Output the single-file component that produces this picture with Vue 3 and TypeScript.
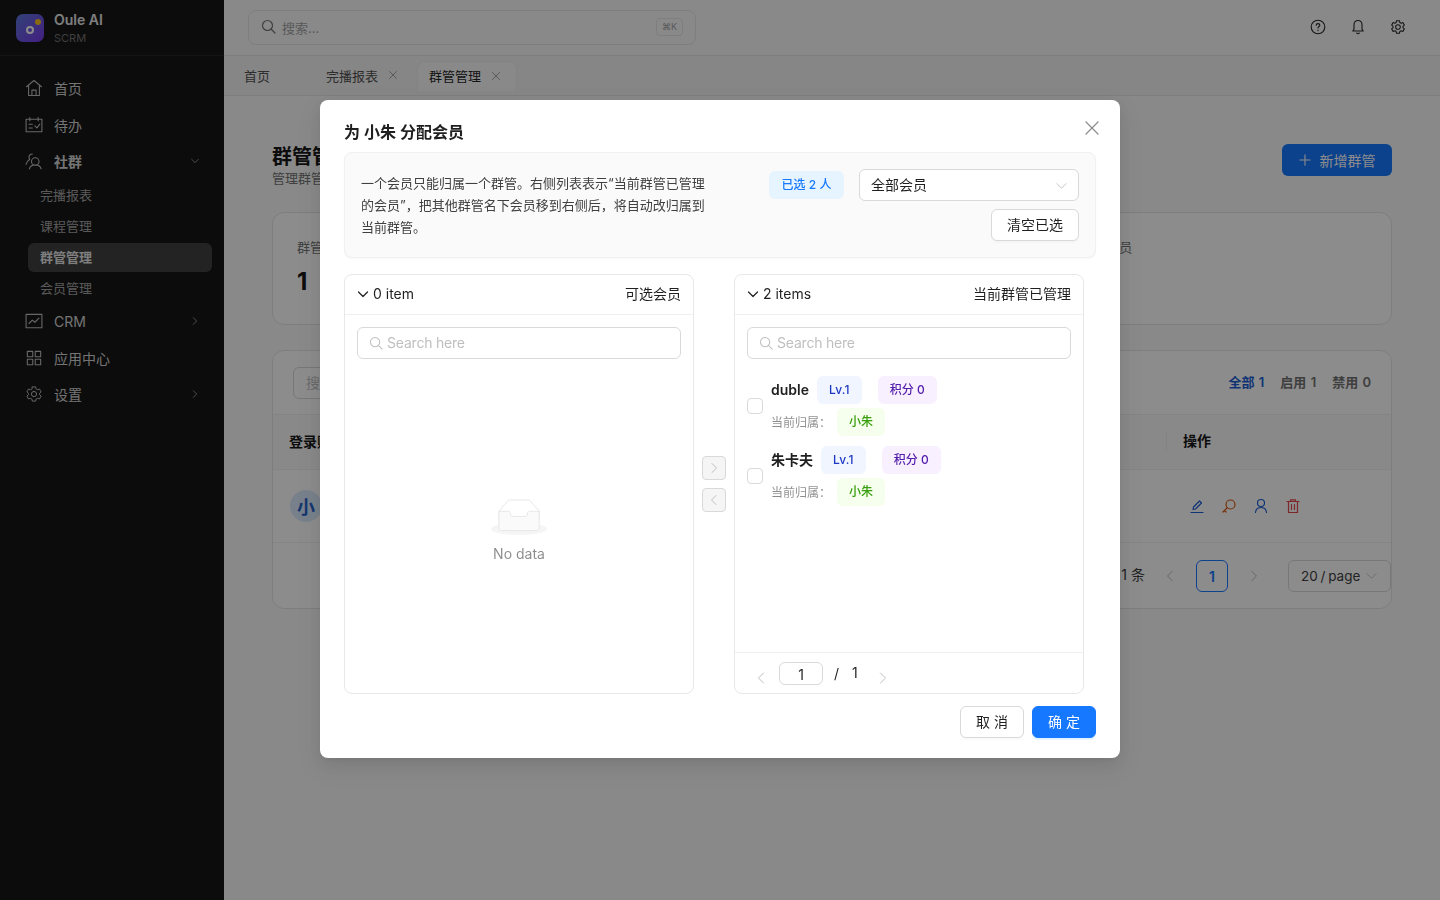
<script setup lang="ts">
import { ref } from 'vue';

const icons: Record<string, string> = {
  home: 'M3 10.500 12 3l9 7.500M5.500 8.500V21h13V8.500M9.500 21v-6.500h5V21',
  todo: 'M2.500 5h19v15h-19zM7 3v4M17 3v4M6 11h4M6 15.500h4M13 13l2.500 2.500L19 11',
  group: 'M10 3.500a4 4 0 0 0-4 4.200c0 1 .3 1.800.8 2.500C4.500 11.500 3 13.800 2.500 16M13.500 8a4.500 4.500 0 1 0 0 9 4.500 4.500 0 0 0 0-9M6.500 21.500c.5-3 3.200-4.800 7-4.800s6.500 1.800 7 4.800',
  crm: 'M2.500 4h19v16h-19zM6 15l4-4 3 2.500 5-5',
  apps: 'M4 4h6.500v6.500H4zM13.500 4H20v6.500h-6.500zM4 13.500h6.500V20H4zM13.500 13.500H20V20h-6.500z',
  gear: 'M12 8.500a3.500 3.500 0 1 0 0 7 3.500 3.500 0 0 0 0-7ZM9.800 2.500h4.400l.6 2.800 1.800 1 2.700-.9 2.200 3.800-2.100 1.900v1.800l2.100 1.900-2.200 3.800-2.700-.9-1.800 1-.6 2.800H9.800l-.6-2.800-1.800-1-2.700.9-2.200-3.800 2.100-1.900v-1.800L2.500 9.200l2.200-3.800 2.700.9 1.800-1z',
};

const subItems = [
  { label: '完播报表', active: false },
  { label: '课程管理', active: false },
  { label: '群管管理', active: true },
  { label: '会员管理', active: false },
];

const tabs = [
  { label: '首页', closable: false, active: false },
  { label: '完播报表', closable: true, active: false },
  { label: '群管管理', closable: true, active: true },
];

// only the first card's number shows, the others sit behind the dialog
const stats = [
  { label: '群管总数', value: '1' },
  { label: '启用群管', value: '' },
  { label: '已管理总会员', value: '' },
];

const members = ref([
  { name: 'duble', level: 'Lv.1', points: 0, owner: '小朱' },
  { name: '朱卡夫', level: 'Lv.1', points: 0, owner: '小朱' },
]);
</script>

<template>
  <div class="layout">
    <aside class="sidebar">
      <div class="brand">
        <div class="logo"><span class="logo-ring"></span><span class="logo-dot"></span></div>
        <div class="brand-text">
          <div class="brand-name">Oule AI</div>
          <div class="brand-sub">SCRM</div>
        </div>
      </div>
      <nav class="nav">
        <div class="nav-item">
          <svg class="nav-icon" viewBox="0 0 24 24"><path :d="icons.home" /></svg>
          <span>首页</span>
        </div>
        <div class="nav-item">
          <svg class="nav-icon" viewBox="0 0 24 24"><path :d="icons.todo" /></svg>
          <span>待办</span>
        </div>
        <div class="nav-item open">
          <svg class="nav-icon" viewBox="0 0 24 24"><path :d="icons.group" /></svg>
          <span>社群</span>
          <svg class="nav-arrow" viewBox="0 0 12 12"><path d="M2 4l4 4 4-4" /></svg>
        </div>
        <div class="sub-list">
          <div v-for="s in subItems" :key="s.label" class="sub-item" :class="{ active: s.active }">{{ s.label }}</div>
        </div>
        <div class="nav-item">
          <svg class="nav-icon" viewBox="0 0 24 24"><path :d="icons.crm" /></svg>
          <span>CRM</span>
          <svg class="nav-arrow" viewBox="0 0 12 12"><path d="M4 2l4 4-4 4" /></svg>
        </div>
        <div class="nav-item">
          <svg class="nav-icon" viewBox="0 0 24 24"><path :d="icons.apps" /></svg>
          <span>应用中心</span>
        </div>
        <div class="nav-item">
          <svg class="nav-icon gear-icon" viewBox="0 0 24 24"><path :d="icons.gear" /></svg>
          <span>设置</span>
          <svg class="nav-arrow" viewBox="0 0 12 12"><path d="M4 2l4 4-4 4" /></svg>
        </div>
      </nav>
    </aside>

    <div class="main">
      <header class="topbar">
        <div class="global-search">
          <svg class="search-icon" viewBox="0 0 16 16"><circle cx="6.500" cy="6.500" r="5" /><path d="M10 10l4 4" /></svg>
          <span class="global-placeholder">搜索...</span>
          <span class="kbd">⌘K</span>
        </div>
        <div class="top-actions">
          <svg class="top-icon" viewBox="0 0 16 16"><circle cx="8" cy="8" r="6.800" /><path d="M6.200 6.300c0-1 .8-1.700 1.800-1.700s1.800.7 1.800 1.600c0 1.300-1.800 1.400-1.800 2.800M8 11v.6" /></svg>
          <svg class="top-icon" viewBox="0 0 16 16"><path d="M8 1.500c-2.500 0-4 1.800-4 4.200v4.500L2.800 12h10.400L12 10.200V5.700c0-2.400-1.500-4.200-4-4.200ZM6.700 14c.3.500.8.700 1.300.7s1-.2 1.300-.7" /></svg>
          <svg class="top-icon gear" viewBox="0 0 24 24"><path :d="icons.gear" /></svg>
        </div>
      </header>

      <div class="tabs">
        <div v-for="t in tabs" :key="t.label" class="tab" :class="{ active: t.active, plain: !t.closable }">
          <span>{{ t.label }}</span>
          <svg v-if="t.closable" class="tab-close" viewBox="0 0 10 10"><path d="M1.500 1.500l7 7M8.500 1.500l-7 7" /></svg>
        </div>
      </div>

      <main class="content">
        <div class="page-head">
          <div class="page-head-text">
            <h1 class="page-title">群管管理</h1>
            <p class="page-sub">管理群管账号</p>
          </div>
          <button class="add-btn">
            <svg viewBox="0 0 14 14"><path d="M7 1v12M1 7h12" /></svg>
            <span>新增群管</span>
          </button>
        </div>

        <div class="stats">
          <div v-for="s in stats" :key="s.label" class="stat-card">
            <div class="stat-label">{{ s.label }}</div>
            <div v-if="s.value" class="stat-value">{{ s.value }}</div>
          </div>
        </div>

        <section class="table-card">
          <div class="toolbar">
            <div class="table-search">搜索群管</div>
            <div class="filters">
              <span class="filter on">全部 1</span>
              <span class="filter">启用 1</span>
              <span class="filter">禁用 0</span>
            </div>
          </div>
          <div class="thead">
            <span class="th-name">登录账号</span>
            <span class="th-op">操作</span>
          </div>
          <div class="trow">
            <div class="avatar">小</div>
            <div class="ops">
              <svg class="op blue" viewBox="0 0 16 16"><path d="M2 14.500h12M4 11.500l.5-2.500 6-6 2 2-6 6z" /></svg>
              <svg class="op orange" viewBox="0 0 16 16"><circle cx="9.500" cy="6.500" r="4.500" /><path d="M6.300 9.700 2 14M3.500 12.500l1.500 1.500" /></svg>
              <svg class="op blue" viewBox="0 0 16 16"><circle cx="8" cy="5" r="3.500" /><path d="M2.500 14.500c.3-3 2.500-5 5.500-5s5.200 2 5.500 5" /></svg>
              <svg class="op red" viewBox="0 0 16 16"><path d="M2 3.500h12M5.500 3.500V1.800h5v1.700M3.500 3.500v11h9v-11M6.500 6.500v5M9.500 6.500v5" /></svg>
            </div>
          </div>
          <div class="table-foot">
            <span class="total">共 1 条</span>
            <svg class="page-arrow" viewBox="0 0 12 12"><path d="M8.500 1 3.500 6l5 5" /></svg>
            <span class="page-current">1</span>
            <svg class="page-arrow" viewBox="0 0 12 12"><path d="M3.500 1l5 5-5 5" /></svg>
            <span class="page-size">
              <span class="page-size-text">20 / page</span>
              <svg viewBox="0 0 12 12"><path d="M1 4l5 5 5-5" /></svg>
            </span>
          </div>
        </section>
      </main>
    </div>

    <div class="mask"></div>

    <div class="modal">
      <svg class="modal-close" viewBox="0 0 14 14"><path d="M1 1l12 12M13 1 1 13" /></svg>
      <div class="modal-title">为 小朱 分配会员</div>

      <div class="info-box">
        <p class="info-text">一个会员只能归属一个群管。右侧列表表示“当前群管已管理的会员”，把其他群管名下会员移到右侧后，将自动改归属到当前群管。</p>
        <div class="info-side">
          <div class="info-row">
            <span class="picked">已选 2 人</span>
            <div class="select">
              <span>全部会员</span>
              <svg viewBox="0 0 12 12"><path d="M1 4l5 5 5-5" /></svg>
            </div>
          </div>
          <button class="btn clear-btn">清空已选</button>
        </div>
      </div>

      <div class="transfer">
        <div class="panel">
          <div class="panel-head">
            <svg class="head-arrow" viewBox="0 0 12 12"><path d="M1.500 4l4.500 4.500L10.500 4" /></svg>
            <span class="head-count">0 item</span>
            <span class="head-title">可选会员</span>
          </div>
          <div class="panel-body">
            <div class="panel-search">
              <svg viewBox="0 0 16 16"><circle cx="6.500" cy="6.500" r="5" /><path d="M10 10l4 4" /></svg>
              <span>Search here</span>
            </div>
            <div class="empty">
              <svg class="empty-art" width="56" height="36" viewBox="0 0 64 41">
                <g transform="translate(0 1)" fill="none" fill-rule="evenodd">
                  <ellipse fill="#f5f5f5" stroke="none" cx="32" cy="33" rx="32" ry="7" />
                  <g fill-rule="nonzero" stroke="#e5e5e5">
                    <path d="M55 12.760L44.854 1.258C44.367.474 43.656 0 42.907 0H21.093c-.749 0-1.460.474-1.947 1.257L9 12.761V22h46v-9.240z" />
                    <path d="M41.613 15.931c0-1.605.994-2.930 2.227-2.931H55v18.137C55 33.260 53.680 35 52.050 35h-40.100C10.320 35 9 33.259 9 31.137V13h11.160c1.233 0 2.227 1.323 2.227 2.928v.022c0 1.605 1.005 2.901 2.237 2.901h14.752c1.232 0 2.237-1.308 2.237-2.913v-.007z" fill="#fafafa" />
                  </g>
                </g>
              </svg>
              <div class="empty-text">No data</div>
            </div>
          </div>
        </div>

        <div class="transfer-ops">
          <span class="op-btn"><svg viewBox="0 0 12 12"><path d="M4 1.500 8.500 6 4 10.500" /></svg></span>
          <span class="op-btn"><svg viewBox="0 0 12 12"><path d="M8 1.500 3.500 6 8 10.500" /></svg></span>
        </div>

        <div class="panel">
          <div class="panel-head">
            <svg class="head-arrow" viewBox="0 0 12 12"><path d="M1.500 4l4.500 4.500L10.500 4" /></svg>
            <span class="head-count">2 items</span>
            <span class="head-title">当前群管已管理</span>
          </div>
          <div class="panel-body">
            <div class="panel-search">
              <svg viewBox="0 0 16 16"><circle cx="6.500" cy="6.500" r="5" /><path d="M10 10l4 4" /></svg>
              <span>Search here</span>
            </div>
            <div class="member-list">
              <div v-for="m in members" :key="m.name" class="member">
                <span class="checkbox"></span>
                <div class="member-info">
                  <div class="member-line">
                    <span class="member-name">{{ m.name }}</span>
                    <span class="tag tag-level">{{ m.level }}</span>
                    <span class="tag tag-points">积分 {{ m.points }}</span>
                  </div>
                  <div class="member-line">
                    <span class="owner-label">当前归属：</span>
                    <span class="tag tag-owner">{{ m.owner }}</span>
                  </div>
                </div>
              </div>
            </div>
          </div>
          <div class="panel-foot">
            <svg class="foot-arrow" viewBox="0 0 12 12"><path d="M8.500 1 3.500 6l5 5" /></svg>
            <span class="foot-input">1</span>
            <span class="foot-slash">/</span>
            <span class="foot-total">1</span>
            <svg class="foot-arrow" viewBox="0 0 12 12"><path d="M3.500 1l5 5-5 5" /></svg>
          </div>
        </div>
      </div>

      <div class="modal-foot">
        <button class="btn">取 消</button>
        <button class="btn primary">确 定</button>
      </div>
    </div>
  </div>
</template>

<style>
html,
body {
  margin: 0;
  background: #fafafa;
}
</style>

<style scoped>
* {
  box-sizing: border-box;
}

svg {
  fill: none;
  stroke: currentColor;
  stroke-linecap: round;
  stroke-linejoin: round;
  flex: none;
}

.layout {
  display: flex;
  width: 1440px;
  height: 900px;
  overflow: hidden;
  font-family: Inter, 'Noto Sans CJK SC', sans-serif;
  font-size: 14px;
  color: #171717;
  background: #fafafa;
}

.sidebar {
  width: 224px;
  flex: none;
  background: #171717;
  color: #d4d4d4;
}

.brand {
  display: flex;
  align-items: center;
  gap: 10px;
  height: 56px;
  padding: 0 16px;
  border-bottom: 1px solid #262626;
}

.logo {
  position: relative;
  width: 28px;
  height: 28px;
  border-radius: 7px;
  background: linear-gradient(135deg, #5a78d8 0%, #7c3aed 100%);
}

.logo-ring {
  position: absolute;
  left: 10px;
  top: 12px;
  width: 8px;
  height: 8px;
  border: 2px solid #fff;
  border-radius: 50%;
}

.logo-dot {
  position: absolute;
  right: 3px;
  top: 5px;
  width: 6px;
  height: 6px;
  border-radius: 50%;
  background: #fbbf24;
}

.brand-name {
  font-size: 14px;
  line-height: 20px;
  font-weight: 600;
  color: #e5e5e5;
}

.brand-sub {
  font-size: 11px;
  line-height: 16px;
  color: #737373;
}

.nav {
  padding: 14px 12px 0;
}

.nav-item {
  display: flex;
  align-items: center;
  gap: 10px;
  height: 36px;
  margin-bottom: 0.5px;
  padding: 0 12px;
}

.nav-item.open {
  font-weight: 600;
}

.nav-icon {
  width: 20px;
  height: 20px;
  stroke-width: 1.300;
  color: #bdbdbd;
}

.nav-icon.gear-icon {
  transform: scale(0.9);
}

.nav-arrow {
  width: 10px;
  height: 10px;
  margin-left: auto;
  color: #a3a3a3;
}

.sub-list {
  display: flex;
  flex-direction: column;
  gap: 2px;
  padding: 1px 0 0.700px 16px;
}

.sub-item {
  height: 29px;
  line-height: 29px;
  padding-left: 12px;
  font-size: 13px;
  color: #a3a3a3;
  border-radius: 6px;
}

.sub-item.active {
  background: #404040;
  color: #e5e5e5;
  font-weight: 600;
}

.main {
  flex: 1;
  min-width: 0;
}

.topbar {
  display: flex;
  align-items: center;
  justify-content: space-between;
  height: 56px;
  padding: 0 34px 1px 24px;
  background: #fafafa;
  border-bottom: 1px solid #e5e5e5;
}

.global-search {
  display: flex;
  align-items: center;
  width: 448px;
  height: 35px;
  padding: 0 12px;
  border: 1px solid #e5e5e5;
  border-radius: 8px;
  color: #737373;
}

.search-icon {
  width: 16px;
  height: 16px;
  stroke-width: 1.200;
}

.global-placeholder {
  margin-left: 5px;
  font-size: 13px;
  color: #a3a3a3;
}

.kbd {
  margin-left: auto;
  padding: 0 5px;
  font-size: 9px;
  line-height: 16px;
  color: #a3a3a3;
  border: 1px solid #e5e5e5;
  border-radius: 4px;
}

.top-actions {
  display: flex;
  gap: 24px;
  color: #262626;
}

.top-icon {
  width: 16px;
  height: 16px;
  stroke-width: 1.100;
}

.top-icon.gear {
  stroke-width: 1.600;
}

.tabs {
  display: flex;
  align-items: flex-end;
  height: 40px;
  padding: 0 0 4px 8px;
  background: #f5f5f5;
  border-bottom: 1px solid #e5e5e5;
}

.tab {
  display: flex;
  align-items: center;
  gap: 10px;
  height: 30px;
  padding: 0 12px 2px;
  font-size: 13px;
  color: #525252;
  border-radius: 8px 8px 0 0;
}

.tab.plain {
  width: 82px;
}

.tab.active {
  width: 100px;
  flex: none;
  margin-left: 7px;
  padding: 0 11px 2px;
  color: #262626;
  background: #fafafa;
  border: 1px solid #eeeeee;
  border-bottom: 0;
}

.tab-close {
  width: 10px;
  height: 10px;
  color: #a3a3a3;
}

.content {
  padding: 48px 48px 0;
}

.page-head {
  display: flex;
  align-items: flex-start;
  justify-content: space-between;
}

.page-head-text {
  padding-top: 2px;
}

.page-title {
  margin: 0;
  font-size: 20px;
  line-height: 22px;
  font-weight: 700;
}

.page-sub {
  margin: 0;
  font-size: 13px;
  line-height: 20px;
  color: #737373;
}

.add-btn {
  display: flex;
  align-items: center;
  gap: 9px;
  height: 32px;
  width: 110px;
  padding: 0 0 1px;
  justify-content: center;
  border: 0;
  border-radius: 6px;
  background: #1677ff;
  color: #fff;
  font: inherit;
  font-size: 14px;
}

.add-btn svg {
  width: 12px;
  height: 12px;
  stroke-width: 1.300;
}

.stats {
  display: grid;
  grid-template-columns: repeat(3, 1fr);
  gap: 16px;
  margin-top: 24px;
}

.stat-card {
  height: 113px;
  padding: 24px;
  background: #fff;
  border: 1px solid #e5e5e5;
  border-radius: 12px;
}

.stat-label {
  font-size: 13px;
  line-height: 20px;
  color: #737373;
}

.stat-value {
  margin-top: 11px;
  font-size: 24px;
  line-height: 28px;
  font-weight: 700;
}

.table-card {
  margin-top: 25px;
  height: 259px;
  background: #fff;
  border: 1px solid #e5e5e5;
  border-radius: 12px;
  overflow: hidden;
}

.toolbar {
  display: flex;
  align-items: center;
  justify-content: space-between;
  height: 63px;
  padding: 0 20px;
}

.table-search {
  width: 260px;
  height: 32px;
  padding-left: 12px;
  font-size: 14px;
  line-height: 30px;
  color: #bfbfbf;
  border: 1px solid #d9d9d9;
  border-radius: 6px;
}

.filters {
  display: flex;
  gap: 16px;
  padding-bottom: 2px;
  font-size: 13px;
  font-weight: 600;
  word-spacing: 1px;
  color: #737373;
}

.filter.on {
  color: #1d5fd6;
}

.thead {
  display: flex;
  align-items: center;
  justify-content: space-between;
  height: 56px;
  padding: 0 0 2px 16px;
  font-weight: 600;
  background: #fafafa;
  border-top: 1px solid #f0f0f0;
  border-bottom: 1px solid #f0f0f0;
}

.th-op {
  width: 225px;
  padding-left: 16px;
  border-left: 1px solid #f0f0f0;
  line-height: 22px;
}

.trow {
  display: flex;
  align-items: center;
  justify-content: space-between;
  height: 73px;
  padding: 0 0 0 17px;
  border-bottom: 1px solid #f0f0f0;
}

.avatar {
  display: flex;
  align-items: center;
  justify-content: center;
  width: 32px;
  height: 32px;
  border-radius: 50%;
  font-size: 18px;
  font-weight: 600;
  color: #2563c9;
  background: #dbeafe;
}

.ops {
  display: flex;
  gap: 16px;
  width: 202px;
}

.op {
  width: 16px;
  height: 16px;
  stroke-width: 1.200;
}

.blue {
  color: #1d5fd6;
}

.orange {
  color: #d4570a;
}

.red {
  color: #e5484d;
}

.table-foot {
  display: flex;
  align-items: center;
  justify-content: flex-end;
  height: 65px;
  color: #404040;
}

.total {
  margin-right: 20px;
  margin-bottom: 3px;
}

.page-arrow {
  width: 12px;
  height: 12px;
  margin: 0 -1px;
  color: #bfbfbf;
}

.page-current {
  width: 32px;
  height: 32px;
  margin: 0 21px;
  text-align: center;
  line-height: 32px;
  font-weight: 600;
  color: #1677ff;
  border: 1px solid #1677ff;
  border-radius: 6px;
}

.page-size {
  display: flex;
  align-items: center;
  gap: 6px;
  width: 103px;
  height: 32px;
  margin-left: 29px;
  padding-left: 12px;
  border: 1px solid #d9d9d9;
  border-radius: 6px;
}

.page-size-text {
  font-size: 13.500px;
  word-spacing: -1px;
}

.page-size svg {
  width: 11px;
  height: 11px;
  color: #bfbfbf;
}

.mask {
  position: fixed;
  inset: 0;
  background: rgba(0, 0, 0, 0.45);
}

.modal {
  position: fixed;
  left: 320px;
  top: 100px;
  width: 800px;
  height: 658px;
  padding: 20px 24px;
  background: #fff;
  border-radius: 8px;
  box-shadow: 0 6px 16px rgba(0, 0, 0, 0.08), 0 3px 6px -4px rgba(0, 0, 0, 0.12), 0 9px 28px 8px rgba(0, 0, 0, 0.05);
  color: rgba(0, 0, 0, 0.88);
}

.modal-close {
  position: absolute;
  right: 21px;
  top: 21px;
  width: 14px;
  height: 14px;
  color: #8c8c8c;
  stroke-width: 1.200;
}

.modal-title {
  height: 24px;
  margin-bottom: 8px;
  font-size: 16px;
  line-height: 24px;
  font-weight: 600;
}

.info-box {
  display: flex;
  align-items: center;
  justify-content: space-between;
  height: 106px;
  padding: 0 16px;
  background: #fafafa;
  border: 1px solid #f0f0f0;
  border-radius: 8px;
  box-shadow: 0 1px 2px rgba(0, 0, 0, 0.03);
}

.info-text {
  width: 352px;
  margin: 0 0 1px;
  font-size: 13px;
  line-height: 22px;
  color: #404040;
}

.info-side {
  display: flex;
  flex-direction: column;
  align-items: flex-end;
  gap: 8px;
}

.info-row {
  display: flex;
  align-items: center;
  gap: 15px;
}

.picked {
  width: 75px;
  height: 28px;
  text-align: center;
  font-size: 12px;
  font-weight: 500;
  line-height: 27px;
  color: #1677ff;
  background: #e6f4ff;
  border-radius: 6px;
}

.select {
  display: flex;
  align-items: center;
  justify-content: space-between;
  width: 220px;
  height: 32px;
  padding: 0 11px 2px;
  background: #fff;
  border: 1px solid #d9d9d9;
  border-radius: 6px;
}

.select svg {
  width: 11px;
  height: 11px;
  margin-top: 2px;
  color: #bfbfbf;
}

.btn {
  width: 64px;
  height: 32px;
  padding: 0 0 2px;
  font: inherit;
  font-size: 14px;
  color: rgba(0, 0, 0, 0.88);
  background: #fff;
  border: 1px solid #d9d9d9;
  border-radius: 6px;
  box-shadow: 0 2px 0 rgba(0, 0, 0, 0.02);
}

.clear-btn {
  width: 88px;
}

.btn.primary {
  color: #fff;
  background: #1677ff;
  border-color: #1677ff;
  box-shadow: 0 2px 0 rgba(5, 145, 255, 0.1);
}

.transfer {
  display: flex;
  align-items: center;
  height: 420px;
  margin-top: 16px;
}

.panel {
  display: flex;
  flex-direction: column;
  width: 350px;
  height: 100%;
  border: 1px solid #e8e8e8;
  border-radius: 8px;
}

.panel-head {
  display: flex;
  align-items: center;
  flex: none;
  height: 40px;
  padding: 0 12px 2px;
  border-bottom: 1px solid #f0f0f0;
}

.head-arrow {
  width: 12px;
  height: 12px;
  margin-top: 1px;
  margin-right: 4px;
  stroke-width: 1.200;
}

.head-title {
  margin-left: auto;
  padding-bottom: 2px;
}

.panel-body {
  display: flex;
  flex-direction: column;
  flex: 1;
  min-height: 0;
  padding: 12px 12px 0;
}

.panel-search {
  display: flex;
  align-items: center;
  gap: 3px;
  flex: none;
  height: 32px;
  padding: 0 11px 2px;
  letter-spacing: -0.2px;
  color: #bfbfbf;
  border: 1px solid #d9d9d9;
  border-radius: 6px;
}

.panel-search svg {
  width: 15px;
  height: 15px;
  stroke-width: 1.100;
  margin-top: 2px;
}

.empty {
  display: flex;
  flex-direction: column;
  align-items: center;
  justify-content: center;
  flex: 1;
  padding-top: 12px;
}

.empty-text {
  margin-top: 8px;
  line-height: 22px;
  color: rgba(0, 0, 0, 0.45);
}

.transfer-ops {
  display: flex;
  flex-direction: column;
  align-items: center;
  gap: 8px;
  width: 40px;
}

.op-btn {
  display: flex;
  align-items: center;
  justify-content: center;
  width: 24px;
  height: 24px;
  color: #bfbfbf;
  background: #f5f5f5;
  border: 1px solid #d9d9d9;
  border-radius: 4px;
}

.op-btn svg {
  width: 12px;
  height: 12px;
}

.member-list {
  display: flex;
  flex-direction: column;
  gap: 10px;
  padding-top: 17px;
}

.member {
  display: flex;
  align-items: center;
  gap: 8px;
}

.checkbox {
  width: 16px;
  height: 16px;
  background: #fff;
  border: 1px solid #d9d9d9;
  border-radius: 4px;
}

.member-info {
  display: flex;
  flex-direction: column;
  gap: 4px;
}

.member-line {
  display: flex;
  align-items: center;
  height: 28px;
}

.member-name {
  margin-right: 8px;
  padding-bottom: 2px;
  font-weight: 600;
}

.owner-label {
  margin-right: 6px;
  padding-bottom: 2px;
  font-size: 12px;
  color: rgba(0, 0, 0, 0.45);
}

.tag {
  height: 28px;
  padding: 0 12px;
  font-size: 12px;
  font-weight: 500;
  line-height: 28px;
  border-radius: 6px;
}

.tag-level {
  margin-right: 16px;
  letter-spacing: 0.2px;
  color: #1d39c4;
  background: #f0f5ff;
}

.tag-points {
  color: #531dab;
  background: #f9f0ff;
}

.tag-owner {
  color: #389e0d;
  background: #f6ffed;
}

.panel-foot {
  display: flex;
  align-items: flex-start;
  flex: none;
  height: 41px;
  padding: 9px 0 0 20px;
  border-top: 1px solid #f0f0f0;
}

.foot-arrow {
  width: 12px;
  height: 12px;
  margin-top: 10px;
  color: #bfbfbf;
}

.foot-input {
  width: 44px;
  height: 23px;
  margin-left: 12px;
  text-align: center;
  line-height: 23px;
  border: 1px solid #d9d9d9;
  border-radius: 6px;
}

.foot-slash {
  margin-left: 11px;
  line-height: 24px;
}

.foot-total {
  margin-left: 13px;
  line-height: 22px;
}

.foot-arrow:last-child {
  margin-left: 19px;
}

.modal-foot {
  display: flex;
  justify-content: flex-end;
  gap: 8px;
  margin-top: 12px;
}
</style>
